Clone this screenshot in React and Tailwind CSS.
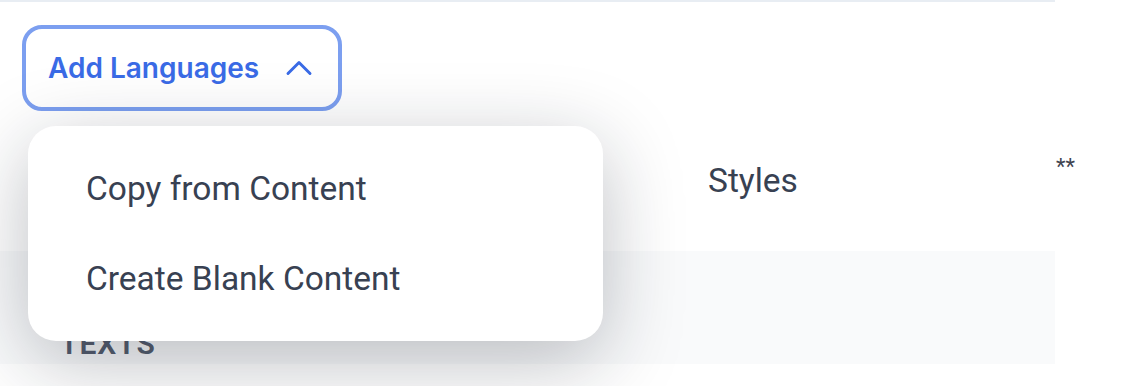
import { ChevronUp } from 'lucide-react'

const roboto = { fontFamily: 'Roboto, "Liberation Sans", sans-serif' }

function LanguageMenu() {
  return (
    <div
      className="absolute left-[28px] top-[126px] flex h-[215px] w-[575px] flex-col justify-center gap-[40px] rounded-[28px] bg-white pl-[58px] shadow-[0_20px_80px_rgba(17,24,39,0.28)]"
      style={roboto}
    >
      <div className="text-[33.5px] leading-[50px] text-[#384152]">Copy from Content</div>
      <div className="text-[33.5px] leading-[50px] text-[#384152]">Create Blank Content</div>
    </div>
  )
}

export default function App() {
  return (
    <div className="relative flex h-[386px] w-[1146px] overflow-hidden bg-white">
      <div className="flex w-[1055px] flex-col border-t-2 border-[#e8edf3]">
        <div className="pl-[22px] pt-[23px]">
          <button
            className="flex h-[86px] w-[320px] items-center gap-[18px] rounded-[20px] border-4 border-[#7c9ff0] bg-white pl-[22px] text-[28px] font-semibold text-[#3a6be6]"
            style={{ fontFamily: 'Inter, "Liberation Sans", sans-serif' }}
          >
            Add Languages
            <ChevronUp size={44} strokeWidth={1.6} />
          </button>
        </div>
        <div className="flex h-[140px] items-center pl-[708px]" style={roboto}>
          <span className="text-[33.5px] text-[#384152]">Styles</span>
        </div>
        <div className="flex h-[113px] items-end bg-[#f9fafb] pb-[5px] pl-[60px]" style={roboto}>
          <span className="text-[30px] font-semibold leading-none tracking-[1px] text-[#555d6e]">TEXTS</span>
        </div>
      </div>
      <div className="pl-[1px] pt-[150px] text-[22px] text-[#3f4450]" style={roboto}>
        **
      </div>
      <LanguageMenu />
    </div>
  )
}
